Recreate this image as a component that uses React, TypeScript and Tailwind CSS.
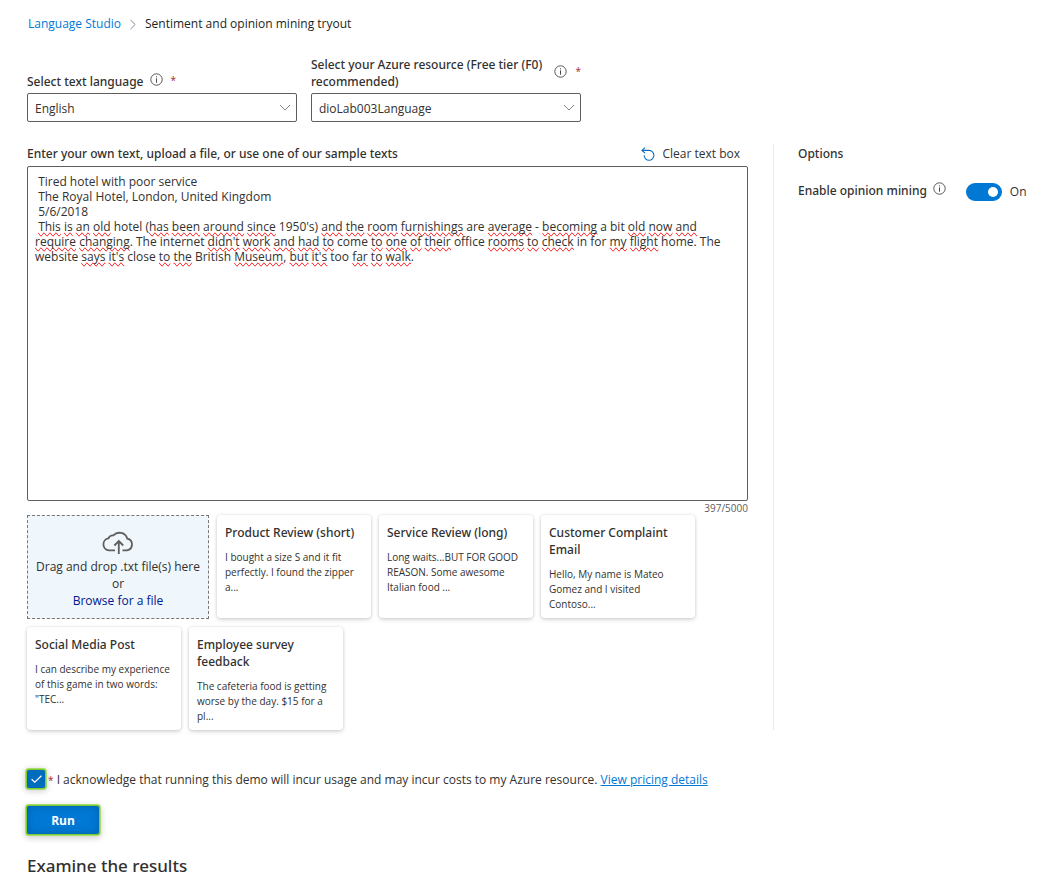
import { useState } from "react";

const initialText = ` Tired hotel with poor service
 The Royal Hotel, London, United Kingdom
 5/6/2018
 This is an old hotel (has been around since 1950's) and the room furnishings are average - becoming a bit old now and require changing. The internet didn't work and had to come to one of their office rooms to check in for my flight home. The website says it's close to the British Museum, but it's too far to walk.`;

const flagged = new Set(
  "This is an old has been around since and the room furnishings average becoming now require changing didn't work had to one of their rooms check my flight says it's Museum but far walk".split(" "),
);

const samples = [
  { title: "Product Review (short)", body: "I bought a size S and it fit perfectly. I found the zipper a..." },
  { title: "Service Review (long)", body: "Long waits...BUT FOR GOOD REASON. Some awesome Italian food ..." },
  { title: "Customer Complaint Email", body: "Hello, My name is Mateo Gomez and I visited Contoso..." },
  { title: "Social Media Post", body: 'I can describe my experience of this game in two words: "TEC...' },
  { title: "Employee survey feedback", body: "The cafeteria food is getting worse by the day. $15 for a pl..." },
];

function InfoIcon() {
  return (
    <svg className="size-[13px] shrink-0" viewBox="0 0 13 13" fill="none" stroke="#484644" aria-hidden="true">
      <circle cx="6.5" cy="6.5" r="5.7" strokeWidth="0.9" />
      <path d="M6.5 5.4V9.7" strokeWidth="1" />
      <path d="M6.5 3.3V4.3" strokeWidth="1" />
    </svg>
  );
}

function Required() {
  return <span className="text-[10px] text-[#a4262c]">*</span>;
}

function Dropdown({ id, label, value }: { id: string; label: string; value: string }) {
  return (
    <div className="flex w-[270px] flex-col gap-[3px]">
      <div className="flex items-center gap-[6px]">
        <label htmlFor={id} className="max-w-[240px] font-['Noto_Sans','Open_Sans',sans-serif] font-medium leading-[17px]">
          {label}
        </label>
        <span className="flex items-center gap-2 pb-1 leading-3">
          <InfoIcon />
          <Required />
        </span>
      </div>
      <div className="grid items-center">
        <select
          id={id}
          defaultValue={value}
          className="col-start-1 row-start-1 h-[29px] appearance-none rounded-[2px] border border-[#605e5c] bg-white pl-[7px] pr-7 pt-[2px]"
        >
          <option>{value}</option>
        </select>
        <svg
          className="pointer-events-none col-start-1 row-start-1 mr-[6px] h-[7px] w-3 justify-self-end"
          viewBox="0 0 12 7"
          fill="none"
          stroke="#8a8886"
          aria-hidden="true"
        >
          <path d="M1 1L6 6L11 1" />
        </svg>
      </div>
    </div>
  );
}

function SpellingMarks({ text }: { text: string }) {
  let line = 0;
  return (
    <>
      {text.split(/(\s+|[().,])/).map((part, i) => {
        line += (part.match(/\n/g) || []).length;
        return line >= 3 && flagged.has(part) ? (
          <span key={i} className="[text-decoration-line:spelling-error]">
            {part}
          </span>
        ) : (
          part
        );
      })}
    </>
  );
}

export default function App() {
  const [text, setText] = useState(initialText);
  const [agreed, setAgreed] = useState(true);
  const [mining, setMining] = useState(true);

  return (
    <main className="bg-white pb-4 pt-[15px] font-['Open_Sans','Noto_Sans',sans-serif] text-[12px] text-[#323130]">
      <nav aria-label="Breadcrumb" className="flex items-center gap-2 px-7 leading-[18px]">
        <a href="#" className="text-[#0078d4]">
          Language Studio
        </a>
        <svg className="h-[11px] w-2" viewBox="0 0 8 11" fill="none" stroke="#7f8fa3" aria-hidden="true">
          <path d="M1.5 1L6.2 5.5L1.5 10" />
        </svg>
        <span className="text-[#201f1e]">Sentiment and opinion mining tryout</span>
      </nav>

      <div className="mt-[23px] flex items-end gap-[14px] px-[27px]">
        <Dropdown id="language" label="Select text language" value="English" />
        <Dropdown
          id="resource"
          label="Select your Azure resource (Free tier (F0) recommended)"
          value="dioLab003Language"
        />
      </div>

      <div className="mt-[22px] flex">
        <section className="min-w-0 flex-1 pl-[27px] pr-[25px]">
          <div className="flex items-center justify-between pb-[2px] leading-5">
            <label htmlFor="document" className="font-['Noto_Sans','Open_Sans',sans-serif] font-medium">
              Enter your own text, upload a file, or use one of our sample texts
            </label>
            <button type="button" className="flex items-center gap-[7px] pr-2" onClick={() => setText("")}>
              <svg className="size-[14px]" viewBox="0 0 14 14" fill="none" stroke="#0f6cbd" strokeWidth="1.1" aria-hidden="true">
                <path d="M4 0.6L1 3.4L4 6.2" />
                <path d="M1 3.4H8A4.9 4.9 0 1 1 3.1 8.3" />
              </svg>
              Clear text box
            </button>
          </div>
          <div className="grid h-[335px]">
            <div
              aria-hidden="true"
              className="col-start-1 row-start-1 whitespace-pre-wrap break-words border border-transparent px-[7px] py-[7px] leading-[15px] text-transparent"
            >
              <SpellingMarks text={text} />
            </div>
            <textarea
              id="document"
              value={text}
              onChange={(e) => setText(e.target.value)}
              spellCheck={false}
              className="col-start-1 row-start-1 resize-none rounded-[2px] border border-[#605e5c] bg-transparent px-[7px] py-[7px] leading-[15px]"
            />
          </div>
          <p className="text-right text-[10px] leading-[14px] text-[#605e5c]">397/5000</p>

          <div className="flex flex-wrap gap-2">
            <div className="flex h-[104px] w-[182px] flex-col items-center border border-dashed border-[#797775] bg-[#eff6fc] pt-[14px] leading-[17px]">
              <svg className="h-[25px] w-8 shrink-0" viewBox="0 0 32 25" fill="none" stroke="#605e5c" strokeWidth="1.8" aria-hidden="true">
                <path d="M13 20.3H7A6 6 0 0 1 6.4 8.4A5 5 0 0 1 11.4 5.4A8.2 8.2 0 0 1 25.3 8.7A5.9 5.9 0 0 1 25 20.3H20.5" />
                <path d="M16.8 24V11.5M12.4 15.5L16.8 11.1L21.2 15.5" />
              </svg>
              <span className="mt-[3px]">Drag and drop .txt file(s) here</span>
              <span>or</span>
              <button type="button" className="text-[#00188f]">
                Browse for a file
              </button>
            </div>
            {samples.map((s) => (
              <button
                key={s.title}
                type="button"
                onClick={() => setText(s.body)}
                className="flex h-[103px] w-[154px] flex-col gap-[9px] rounded-[4px] bg-white px-2 pt-[9px] text-left shadow-[0_2px_4px_rgba(0,0,0,0.14),0_0_3px_rgba(0,0,0,0.12)]"
              >
                <span className="font-['Noto_Sans','Open_Sans',sans-serif] font-medium leading-[17px]">{s.title}</span>
                <span className="text-[10px] leading-[15px]">{s.body}</span>
              </button>
            ))}
          </div>
        </section>

        <aside className="w-[279px] shrink-0 border-l border-[#edebe9] pl-6">
          <h2 className="font-['Noto_Sans','Open_Sans',sans-serif] font-medium leading-5">Options</h2>
          <div className="mt-4 flex items-center">
            <label htmlFor="mining" className="font-['Noto_Sans','Open_Sans',sans-serif] font-medium leading-5">
              Enable opinion mining
            </label>
            <span className="ml-[6px] pb-1">
              <InfoIcon />
            </span>
            <div className="ml-5 grid items-center pt-[3px]">
              <input
                id="mining"
                type="checkbox"
                role="switch"
                checked={mining}
                onChange={(e) => setMining(e.target.checked)}
                className="peer col-start-1 row-start-1 h-[18px] w-9 appearance-none rounded-full bg-[#8a8886] checked:bg-[#0078d4]"
              />
              <span className="pointer-events-none col-start-1 row-start-1 ml-1 size-[10px] rounded-full bg-white peer-checked:ml-[22px]" />
            </div>
            <span className="ml-2 pt-[3px]">{mining ? "On" : "Off"}</span>
          </div>
        </aside>
      </div>

      <div className="px-[27px]">
        <div className="mt-[37px] flex items-center leading-5">
          <div className="grid place-items-center">
            <input
              id="acknowledge"
              type="checkbox"
              checked={agreed}
              onChange={(e) => setAgreed(e.target.checked)}
              className="peer col-start-1 row-start-1 size-[18px] appearance-none rounded-[2px] bg-white shadow-[0_0_0_1px_#7ecb2f,0_0_0_2px_#a8dc6c,0_1px_6px_2px_rgba(0,0,0,0.2)] checked:bg-[#006cbe]"
            />
            <svg
              className="pointer-events-none invisible col-start-1 row-start-1 h-2 w-[11px] peer-checked:visible"
              viewBox="0 0 11 8"
              fill="none"
              stroke="white"
              strokeWidth="1.2"
              aria-hidden="true"
            >
              <path d="M0.6 4.2L3.8 7.2L10.4 0.7" />
            </svg>
          </div>
          <p className="ml-[3px] pt-[3px]">
            <label htmlFor="acknowledge">
              <Required /> I acknowledge that running this demo will incur usage and may incur costs to my Azure resource.
            </label>{" "}
            <a href="#" className="text-[#0078d4] underline">
              View pricing details
            </a>
          </p>
        </div>
        <button
          type="button"
          className="mt-4 h-7 w-[72px] rounded-[2px] bg-[#0078d4] pt-[2px] font-bold text-white shadow-[0_0_0_1px_#7ecb2f,0_0_0_2px_#a8dc6c,0_2px_6px_2px_rgba(0,0,0,0.2),inset_0_0_8px_rgba(0,0,0,0.2)]"
        >
          Run
        </button>
        <h2 className="mt-5 font-['Noto_Sans','Open_Sans',sans-serif] text-[17px] font-medium leading-6">
          Examine the results
        </h2>
      </div>
    </main>
  );
}
